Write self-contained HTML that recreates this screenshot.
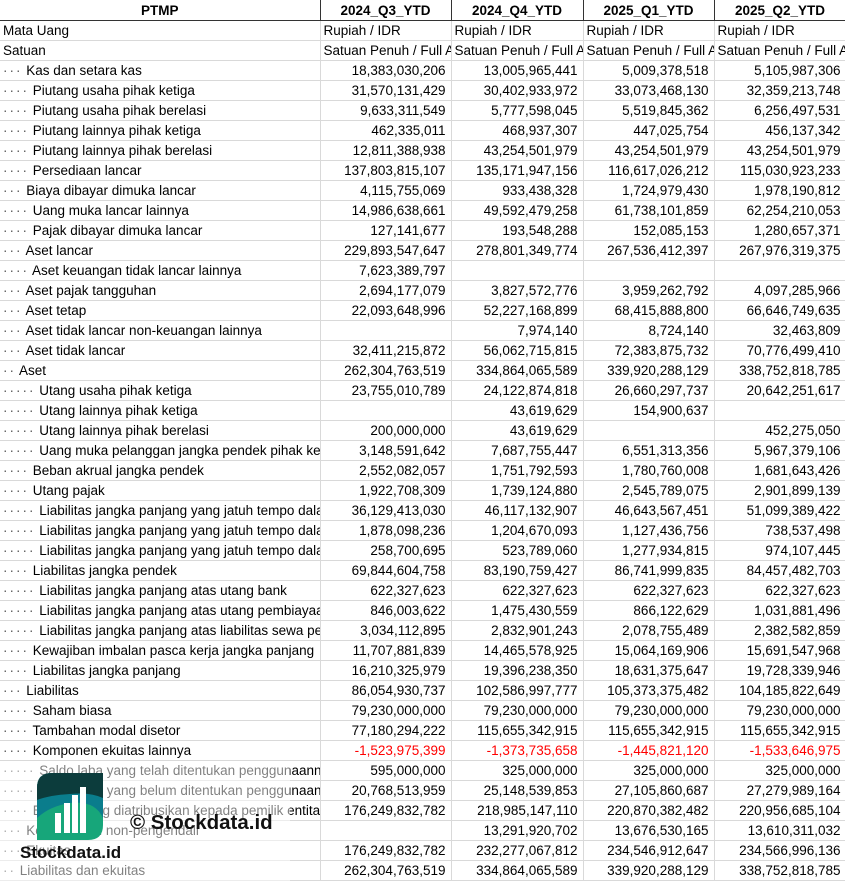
<!DOCTYPE html>
<html><head><meta charset="utf-8"><style>
body{margin:0;width:845px;height:881px;overflow:hidden;background:#fff;font-family:"Liberation Sans",Arial,sans-serif;font-size:13.5px;color:#000;position:relative}
table{border-collapse:collapse;table-layout:fixed;width:846px;position:absolute;left:0;top:0}
td{height:19px;border:1px solid #d9d9d9;white-space:nowrap;overflow:hidden;padding:0 3px;line-height:19px;letter-spacing:0}
td.n{text-align:right;padding-right:5px}
tr.h td{font-weight:bold;text-align:center;height:20px;border-bottom:1px solid #333;border-right:1px solid #333;border-top:none}
td.r{color:#f00}
td:first-child{border-left:none}
.d{color:#555;letter-spacing:2px}
</style></head><body>
<table>
<colgroup><col style="width:320px"><col style="width:131px"><col style="width:132px"><col style="width:131px"><col style="width:132px"></colgroup>
<tr class="h"><td>PTMP</td><td>2024_Q3_YTD</td><td>2024_Q4_YTD</td><td>2025_Q1_YTD</td><td>2025_Q2_YTD</td></tr>
<tr><td>Mata Uang</td><td>Rupiah / IDR</td><td>Rupiah / IDR</td><td>Rupiah / IDR</td><td>Rupiah / IDR</td></tr>
<tr><td>Satuan</td><td>Satuan Penuh / Full Amount</td><td>Satuan Penuh / Full Amount</td><td>Satuan Penuh / Full Amount</td><td>Satuan Penuh / Full Amount</td></tr>
<tr><td><span class="d">···</span> Kas dan setara kas</td><td class="n">18,383,030,206</td><td class="n">13,005,965,441</td><td class="n">5,009,378,518</td><td class="n">5,105,987,306</td></tr>
<tr><td><span class="d">····</span> Piutang usaha pihak ketiga</td><td class="n">31,570,131,429</td><td class="n">30,402,933,972</td><td class="n">33,073,468,130</td><td class="n">32,359,213,748</td></tr>
<tr><td><span class="d">····</span> Piutang usaha pihak berelasi</td><td class="n">9,633,311,549</td><td class="n">5,777,598,045</td><td class="n">5,519,845,362</td><td class="n">6,256,497,531</td></tr>
<tr><td><span class="d">····</span> Piutang lainnya pihak ketiga</td><td class="n">462,335,011</td><td class="n">468,937,307</td><td class="n">447,025,754</td><td class="n">456,137,342</td></tr>
<tr><td><span class="d">····</span> Piutang lainnya pihak berelasi</td><td class="n">12,811,388,938</td><td class="n">43,254,501,979</td><td class="n">43,254,501,979</td><td class="n">43,254,501,979</td></tr>
<tr><td><span class="d">····</span> Persediaan lancar</td><td class="n">137,803,815,107</td><td class="n">135,171,947,156</td><td class="n">116,617,026,212</td><td class="n">115,030,923,233</td></tr>
<tr><td><span class="d">···</span> Biaya dibayar dimuka lancar</td><td class="n">4,115,755,069</td><td class="n">933,438,328</td><td class="n">1,724,979,430</td><td class="n">1,978,190,812</td></tr>
<tr><td><span class="d">····</span> Uang muka lancar lainnya</td><td class="n">14,986,638,661</td><td class="n">49,592,479,258</td><td class="n">61,738,101,859</td><td class="n">62,254,210,053</td></tr>
<tr><td><span class="d">····</span> Pajak dibayar dimuka lancar</td><td class="n">127,141,677</td><td class="n">193,548,288</td><td class="n">152,085,153</td><td class="n">1,280,657,371</td></tr>
<tr><td><span class="d">···</span> Aset lancar</td><td class="n">229,893,547,647</td><td class="n">278,801,349,774</td><td class="n">267,536,412,397</td><td class="n">267,976,319,375</td></tr>
<tr><td><span class="d">····</span> Aset keuangan tidak lancar lainnya</td><td class="n">7,623,389,797</td><td class="n"></td><td class="n"></td><td class="n"></td></tr>
<tr><td><span class="d">···</span> Aset pajak tangguhan</td><td class="n">2,694,177,079</td><td class="n">3,827,572,776</td><td class="n">3,959,262,792</td><td class="n">4,097,285,966</td></tr>
<tr><td><span class="d">···</span> Aset tetap</td><td class="n">22,093,648,996</td><td class="n">52,227,168,899</td><td class="n">68,415,888,800</td><td class="n">66,646,749,635</td></tr>
<tr><td><span class="d">···</span> Aset tidak lancar non-keuangan lainnya</td><td class="n"></td><td class="n">7,974,140</td><td class="n">8,724,140</td><td class="n">32,463,809</td></tr>
<tr><td><span class="d">···</span> Aset tidak lancar</td><td class="n">32,411,215,872</td><td class="n">56,062,715,815</td><td class="n">72,383,875,732</td><td class="n">70,776,499,410</td></tr>
<tr><td><span class="d">··</span> Aset</td><td class="n">262,304,763,519</td><td class="n">334,864,065,589</td><td class="n">339,920,288,129</td><td class="n">338,752,818,785</td></tr>
<tr><td><span class="d">·····</span> Utang usaha pihak ketiga</td><td class="n">23,755,010,789</td><td class="n">24,122,874,818</td><td class="n">26,660,297,737</td><td class="n">20,642,251,617</td></tr>
<tr><td><span class="d">·····</span> Utang lainnya pihak ketiga</td><td class="n"></td><td class="n">43,619,629</td><td class="n">154,900,637</td><td class="n"></td></tr>
<tr><td><span class="d">·····</span> Utang lainnya pihak berelasi</td><td class="n">200,000,000</td><td class="n">43,619,629</td><td class="n"></td><td class="n">452,275,050</td></tr>
<tr><td><span class="d">·····</span> Uang muka pelanggan jangka pendek pihak ketiga</td><td class="n">3,148,591,642</td><td class="n">7,687,755,447</td><td class="n">6,551,313,356</td><td class="n">5,967,379,106</td></tr>
<tr><td><span class="d">····</span> Beban akrual jangka pendek</td><td class="n">2,552,082,057</td><td class="n">1,751,792,593</td><td class="n">1,780,760,008</td><td class="n">1,681,643,426</td></tr>
<tr><td><span class="d">····</span> Utang pajak</td><td class="n">1,922,708,309</td><td class="n">1,739,124,880</td><td class="n">2,545,789,075</td><td class="n">2,901,899,139</td></tr>
<tr><td><span class="d">·····</span> Liabilitas jangka panjang yang jatuh tempo dalam</td><td class="n">36,129,413,030</td><td class="n">46,117,132,907</td><td class="n">46,643,567,451</td><td class="n">51,099,389,422</td></tr>
<tr><td><span class="d">·····</span> Liabilitas jangka panjang yang jatuh tempo dalam</td><td class="n">1,878,098,236</td><td class="n">1,204,670,093</td><td class="n">1,127,436,756</td><td class="n">738,537,498</td></tr>
<tr><td><span class="d">·····</span> Liabilitas jangka panjang yang jatuh tempo dalam</td><td class="n">258,700,695</td><td class="n">523,789,060</td><td class="n">1,277,934,815</td><td class="n">974,107,445</td></tr>
<tr><td><span class="d">····</span> Liabilitas jangka pendek</td><td class="n">69,844,604,758</td><td class="n">83,190,759,427</td><td class="n">86,741,999,835</td><td class="n">84,457,482,703</td></tr>
<tr><td><span class="d">·····</span> Liabilitas jangka panjang atas utang bank</td><td class="n">622,327,623</td><td class="n">622,327,623</td><td class="n">622,327,623</td><td class="n">622,327,623</td></tr>
<tr><td><span class="d">·····</span> Liabilitas jangka panjang atas utang pembiayaan</td><td class="n">846,003,622</td><td class="n">1,475,430,559</td><td class="n">866,122,629</td><td class="n">1,031,881,496</td></tr>
<tr><td><span class="d">·····</span> Liabilitas jangka panjang atas liabilitas sewa pembiayaan</td><td class="n">3,034,112,895</td><td class="n">2,832,901,243</td><td class="n">2,078,755,489</td><td class="n">2,382,582,859</td></tr>
<tr><td><span class="d">····</span> Kewajiban imbalan pasca kerja jangka panjang</td><td class="n">11,707,881,839</td><td class="n">14,465,578,925</td><td class="n">15,064,169,906</td><td class="n">15,691,547,968</td></tr>
<tr><td><span class="d">····</span> Liabilitas jangka panjang</td><td class="n">16,210,325,979</td><td class="n">19,396,238,350</td><td class="n">18,631,375,647</td><td class="n">19,728,339,946</td></tr>
<tr><td><span class="d">···</span> Liabilitas</td><td class="n">86,054,930,737</td><td class="n">102,586,997,777</td><td class="n">105,373,375,482</td><td class="n">104,185,822,649</td></tr>
<tr><td><span class="d">····</span> Saham biasa</td><td class="n">79,230,000,000</td><td class="n">79,230,000,000</td><td class="n">79,230,000,000</td><td class="n">79,230,000,000</td></tr>
<tr><td><span class="d">····</span> Tambahan modal disetor</td><td class="n">77,180,294,222</td><td class="n">115,655,342,915</td><td class="n">115,655,342,915</td><td class="n">115,655,342,915</td></tr>
<tr><td><span class="d">····</span> Komponen ekuitas lainnya</td><td class="n r">-1,523,975,399</td><td class="n r">-1,373,735,658</td><td class="n r">-1,445,821,120</td><td class="n r">-1,533,646,975</td></tr>
<tr><td><span class="d">·····</span> Saldo laba yang telah ditentukan penggunaannya</td><td class="n">595,000,000</td><td class="n">325,000,000</td><td class="n">325,000,000</td><td class="n">325,000,000</td></tr>
<tr><td><span class="d">·····</span> Saldo laba yang belum ditentukan penggunaannya</td><td class="n">20,768,513,959</td><td class="n">25,148,539,853</td><td class="n">27,105,860,687</td><td class="n">27,279,989,164</td></tr>
<tr><td><span class="d">····</span> Ekuitas yang diatribusikan kepada pemilik entitas</td><td class="n">176,249,832,782</td><td class="n">218,985,147,110</td><td class="n">220,870,382,482</td><td class="n">220,956,685,104</td></tr>
<tr><td><span class="d">···</span> Kepentingan non-pengendali</td><td class="n"></td><td class="n">13,291,920,702</td><td class="n">13,676,530,165</td><td class="n">13,610,311,032</td></tr>
<tr><td><span class="d">···</span> Ekuitas</td><td class="n">176,249,832,782</td><td class="n">232,277,067,812</td><td class="n">234,546,912,647</td><td class="n">234,566,996,136</td></tr>
<tr><td><span class="d">··</span> Liabilitas dan ekuitas</td><td class="n">262,304,763,519</td><td class="n">334,864,065,589</td><td class="n">339,920,288,129</td><td class="n">338,752,818,785</td></tr>
</table>
<div style="position:absolute;left:0;top:762px;width:290px;height:119px;background:rgba(255,255,255,0.5)"></div>
<svg style="position:absolute;left:0;top:760px" width="300" height="110" viewBox="0 760 300 110">
<defs><clipPath id="lf"><path d="M52 773 H103 V825 Q103 840 88 840 H37 V788 Q37 773 52 773 Z"/></clipPath></defs>
<g clip-path="url(#lf)">
<rect x="37" y="773" width="66" height="67" fill="#17a67a"/>
<path d="M37 773 H103 V818 Q95 800 70 803 Q50 806 37 818 Z" fill="#0a7d8c"/>
<path d="M37 773 H103 V798 Q90 792 70 794 Q50 795 37 800 Z" fill="#0c3c3c"/>
</g>
<rect x="55" y="813" width="6" height="20" fill="#fff"/>
<rect x="64" y="803" width="6" height="30" fill="#fff"/>
<rect x="72" y="795" width="6" height="38" fill="#fff"/>
<rect x="80" y="787" width="6" height="46" fill="#fff"/>
<text x="130" y="829" font-family="Liberation Sans,sans-serif" font-weight="bold" font-size="20.5" fill="#111">© Stockdata.id</text>
<text x="20" y="858" font-family="Liberation Sans,sans-serif" font-weight="bold" font-size="17" fill="#111">Stockdata.id</text>
</svg>
</body></html>
